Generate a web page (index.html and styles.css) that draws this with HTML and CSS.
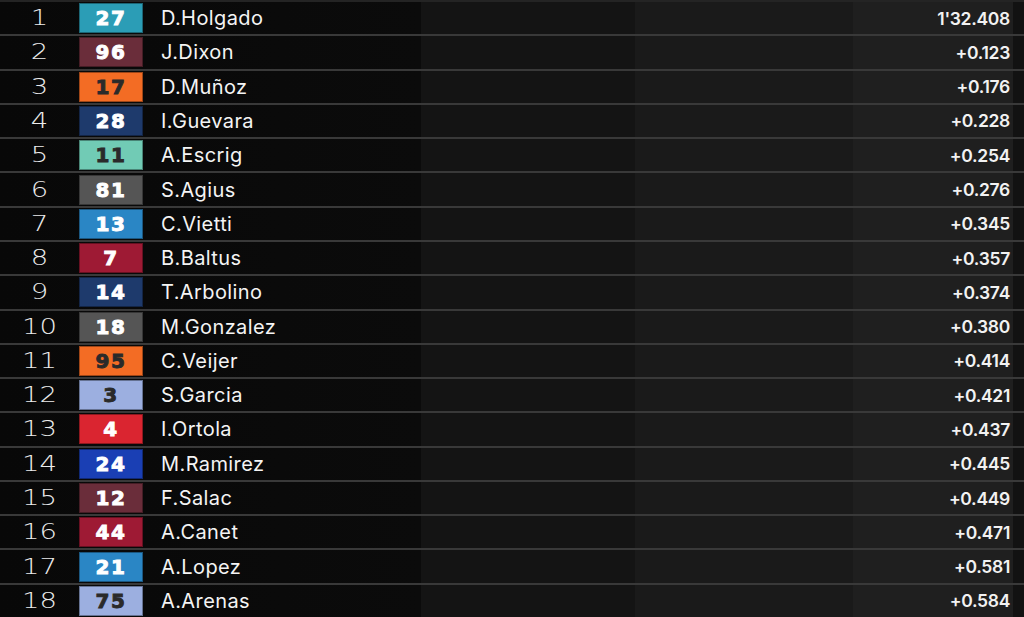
FILE: index.html
```html
<!DOCTYPE html>
<html>
<head>
<meta charset="utf-8">
<link rel="stylesheet" href="styles.css">
</head>
<body>
<div class="board">
  <div class="row"><span class="pos">1</span><span class="num c-teal">27</span><span class="name">D.Holgado</span><span class="time">1'32.408</span></div>
  <div class="row"><span class="pos">2</span><span class="num c-maroon">96</span><span class="name">J.Dixon</span><span class="time">+0.123</span></div>
  <div class="row"><span class="pos">3</span><span class="num c-orange dark">17</span><span class="name">D.Muñoz</span><span class="time">+0.176</span></div>
  <div class="row"><span class="pos">4</span><span class="num c-navy">28</span><span class="name">I.Guevara</span><span class="time">+0.228</span></div>
  <div class="row"><span class="pos">5</span><span class="num c-mint dark">11</span><span class="name">A.Escrig</span><span class="time">+0.254</span></div>
  <div class="row"><span class="pos">6</span><span class="num c-gray">81</span><span class="name">S.Agius</span><span class="time">+0.276</span></div>
  <div class="row"><span class="pos">7</span><span class="num c-blue">13</span><span class="name">C.Vietti</span><span class="time">+0.345</span></div>
  <div class="row"><span class="pos">8</span><span class="num c-crimson">7</span><span class="name">B.Baltus</span><span class="time">+0.357</span></div>
  <div class="row"><span class="pos">9</span><span class="num c-navy">14</span><span class="name">T.Arbolino</span><span class="time">+0.374</span></div>
  <div class="row"><span class="pos">10</span><span class="num c-gray">18</span><span class="name">M.Gonzalez</span><span class="time">+0.380</span></div>
  <div class="row"><span class="pos">11</span><span class="num c-orange dark">95</span><span class="name">C.Veijer</span><span class="time">+0.414</span></div>
  <div class="row"><span class="pos">12</span><span class="num c-lav dark">3</span><span class="name">S.Garcia</span><span class="time">+0.421</span></div>
  <div class="row"><span class="pos">13</span><span class="num c-red">4</span><span class="name">I.Ortola</span><span class="time">+0.437</span></div>
  <div class="row"><span class="pos">14</span><span class="num c-royal">24</span><span class="name">M.Ramirez</span><span class="time">+0.445</span></div>
  <div class="row"><span class="pos">15</span><span class="num c-maroon">12</span><span class="name">F.Salac</span><span class="time">+0.449</span></div>
  <div class="row"><span class="pos">16</span><span class="num c-crimson">44</span><span class="name">A.Canet</span><span class="time">+0.471</span></div>
  <div class="row"><span class="pos">17</span><span class="num c-blue">21</span><span class="name">A.Lopez</span><span class="time">+0.581</span></div>
  <div class="row"><span class="pos">18</span><span class="num c-lav dark">75</span><span class="name">A.Arenas</span><span class="time">+0.584</span></div>
</div>
</body>
</html>
```

FILE: styles.css
```css
html, body {
  margin: 0;
  padding: 0;
  background: #0a0a0a;
}

.board {
  width: 1024px;
  height: 617px;
  display: grid;
  grid-template-rows: repeat(18, 1fr);
  overflow: hidden;
}

.row {
  display: grid;
  grid-template-columns: 79px 64px 1fr auto;
  align-items: center;
  border-top: 2px solid #393939;
  background: linear-gradient(to right,
    #080808 0, #0b0b0b 421px,
    #141414 421px, #141414 635px,
    #1a1a1a 635px, #1a1a1a 853px,
    #1f1f1f 853px, #1f1f1f 1013px,
    #121212 1013px);
  color: #f2f2f2;
}

.row:first-child {
  border-top-color: #242424;
}

.pos {
  text-align: center;
  font-family: "DejaVu Sans", sans-serif;
  font-weight: 200;
  font-size: 22px;
  line-height: 1;
  color: #ececec;
  transform: scaleX(1.25);
}

.num {
  height: 30px;
  box-sizing: border-box;
  border: 1px solid rgba(0, 0, 0, 0.35);
  display: flex;
  align-items: center;
  justify-content: center;
  font-family: "DejaVu Sans", sans-serif;
  font-weight: 700;
  font-size: 20px;
  line-height: 1;
  color: #ffffff;
  letter-spacing: 1.5px;
  -webkit-text-stroke: 0.9px currentColor;
}

.num.dark {
  color: #2a2a2a;
}

.c-teal { background: #2b9db6; }
.c-maroon { background: #6a2d3a; }
.c-orange { background: #f36c24; }
.c-navy { background: #1e3a6c; }
.c-mint { background: #71cbb5; }
.c-gray { background: #555555; }
.c-blue { background: #2a86c5; }
.c-crimson { background: #9e1a34; }
.c-lav { background: #9cafe0; }
.c-red { background: #da2530; }
.c-royal { background: #1a3fb4; }

.name {
  padding-left: 18px;
  font-family: Inter, sans-serif;
  font-weight: 400;
  font-size: 20px;
  letter-spacing: 0.4px;
  color: #f4f4f4;
}

.time {
  padding-right: 14px;
  font-family: Inter, sans-serif;
  font-weight: 600;
  font-size: 17.5px;
  letter-spacing: -0.3px;
  color: #f2f2f2;
  text-align: right;
}
```
